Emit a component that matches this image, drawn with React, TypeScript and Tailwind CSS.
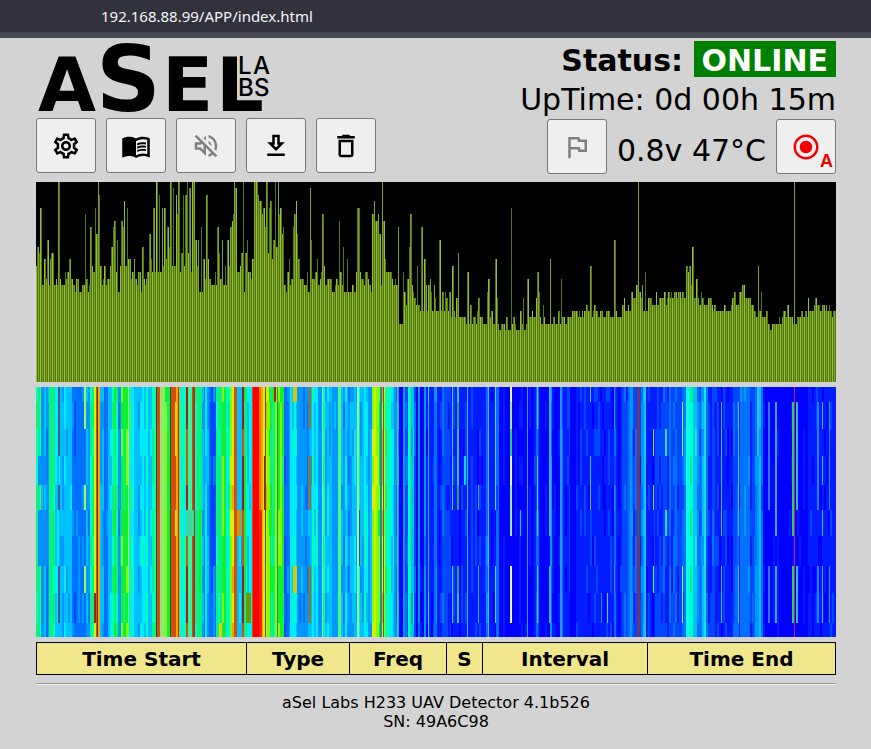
import React from 'react';
import {
  MdDeleteOutline,
  MdMenuBook,
  MdOutlineDownload,
  MdOutlineFlag,
  MdOutlineSettings,
  MdOutlineVolumeOff,
  MdRadioButtonChecked,
} from 'react-icons/md';

const SPECTRUM_HEIGHT = 200;
const SPECTRUM_LEVELS = 31;

// "x:drop" steps, drop is counted in levels from the top of the chart
const SPECTRUM = `
0:13 1:10 3:11 4:4 6:16 8:12 10:15 11:9 13:16 14:12 15:11 18:16 20:15 21:16 22:0 24:15 25:16 29:14 30:15 31:14 33:12
35:15 37:16 39:17 40:15 43:17 46:16 49:5 50:15 52:17 53:16 54:7 56:13 57:14 59:4 60:8 62:0 63:2 64:13 66:16 67:15
68:13 70:16 71:15 74:13 75:10 77:7 78:6 80:14 81:9 82:17 84:13 85:6 87:7 88:3 89:13 91:4 92:12 95:15 96:14 98:12
99:15 101:16 102:14 105:17 106:10 108:15 109:16 110:15 111:14 113:8 115:12 116:14 117:4 119:14 120:0 122:14 123:2
124:14 126:4 127:13 128:4 130:12 131:7 133:10 134:0 136:13 137:1 138:13 140:2 141:5 142:0 144:14 145:11 147:2
148:13 149:2 151:0 152:11 153:1 155:14 156:0 159:9 161:13 162:9 163:17 165:7 166:17 167:12 169:15 170:2 172:12
173:15 175:16 179:14 180:16 181:7 183:11 184:15 186:9 187:16 189:13 190:16 191:9 193:13 194:7 196:6 197:5 198:0
199:1 201:14 204:13 205:11 207:0 208:17 209:11 211:9 212:14 215:15 216:12 218:0 222:2 223:3 226:5 227:4 229:7
230:0 232:11 233:4 234:3 236:12 237:9 239:0 240:10 242:0 243:5 244:4 246:8 247:7 248:16 250:17 251:14 253:12
254:16 255:15 257:7 258:5 260:3 261:8 262:12 264:15 268:16 271:14 272:17 274:1 275:9 276:15 279:14 281:12 282:16
284:15 285:14 286:5 288:13 289:16 291:15 296:17 299:16 300:15 302:16 303:6 304:14 306:16 307:10 308:17 311:12
312:17 316:16 318:17 320:14 321:4 324:14 325:15 328:16 329:14 332:15 333:16 335:17 336:5 338:3 339:6 342:5 343:8
345:16 346:0 347:6 349:12 350:14 356:15 357:16 359:15 360:16 362:7 363:22 367:14 368:17 370:19 371:15 373:10
374:5 376:16 377:17 378:18 380:19 381:13 382:19 384:20 385:7 387:20 388:12 390:16 391:20 392:16 394:15 395:17
396:20 398:16 399:18 400:20 403:9 405:20 406:17 408:20 409:17 410:18 412:20 413:17 415:21 416:13 418:20 419:21
420:18 422:11 423:21 430:22 431:14 433:22 434:19 436:22 437:21 440:22 441:20 442:18 444:21 447:22 451:17 452:15
454:21 455:20 457:22 459:12 461:18 462:22 463:23 465:22 469:23 470:21 472:23 475:4 476:22 477:21 479:22 480:23
484:20 486:22 487:18 488:23 490:22 491:15 493:21 496:20 497:21 500:18 501:14 503:17 504:21 505:22 507:19 508:21
509:22 514:12 515:22 517:21 519:22 522:20 524:22 525:15 526:21 529:22 531:21 536:20 542:21 543:20 544:21 546:20
547:21 548:20 550:19 552:20 554:13 556:21 557:20 558:19 560:20 562:21 564:20 567:21 570:20 574:21 578:9 580:20
581:21 586:19 588:18 589:20 592:19 593:20 595:17 597:18 600:16 602:0 603:17 605:18 606:16 607:20 609:14 610:20
612:18 616:19 620:17 621:19 623:18 628:17 630:19 631:18 632:17 634:18 635:17 636:18 638:17 641:18 642:17 645:18
646:17 648:18 650:13 652:14 653:13 655:16 656:10 658:18 660:15 662:18 663:19 665:17 666:18 668:19 672:18 676:19
677:20 678:19 680:20 688:19 690:20 695:19 696:18 698:17 700:19 703:17 706:16 709:18 715:19 718:20 720:21 722:13
723:20 725:17 726:21 730:20 732:22 734:23 736:22 743:21 744:22 746:21 747:20 750:21 751:19 753:21 757:22 758:0
759:22 761:21 765:20 767:21 769:20 771:21 772:18 773:20 778:19 779:18 781:19 784:20 786:19 789:20 790:19 791:20
793:19 794:20 796:21 797:20`;

// cold to hot
const HEAT = [
  '#0010d0',
  '#0000ff',
  '#001cff',
  '#0048ff',
  '#0070ff',
  '#0098ff',
  '#00c0ff',
  '#00ecf8',
  '#00ffb8',
  '#0cf080',
  '#10f030',
  '#80fc10',
  '#d8f000',
  '#ffa000',
  '#d05010',
  '#ff0000',
];

// "x:level" steps along the band
const WATERFALL = `
0:9 4:8 5:5 8:6 10:5 13:9 19:6 24:5 28:6 36:4 50:5 54:9 58:12 60:14 62:13 64:6 68:4 72:6 76:9 82:5 85:10 90:11 93:7
98:6 104:7 112:6 116:8 120:14 125:11 131:10 134:14 140:13 144:8 150:14 153:9 156:14 159:9 166:5 169:6 173:4 180:9
186:10 190:8 194:11 196:12 198:14 201:6 206:14 208:9 211:7 216:14 217:15 223:13 227:12 231:11 234:9 239:11 242:10
248:4 251:5 254:7 261:5 272:6 276:7 282:5 286:8 289:6 296:5 302:9 305:5 309:6 312:5 318:6 321:9 324:6 328:7 332:5
336:12 340:11 343:10 346:12 349:8 353:7 358:5 363:1 367:5 369:3 372:8 375:6 378:3 380:1 382:5 384:1 388:5 390:2
392:6 393:2 398:4 401:2 404:3 415:2 429:2 450:4 453:2 460:4 463:1 498:2 500:4 503:1 514:4 516:1 525:4 527:2 534:1
540:2 578:3 580:2 586:3 592:4 594:5 597:3 605:5 607:6 610:2 619:3 646:4 650:8 657:6 661:4 666:5 668:7 670:3 679:2
697:3 704:4 714:3 719:5 725:4 727:1 759:1 772:2`;

interface Streak {
  x: number;
  w: number;
  color: string;
  // indexes of the time bands where the signal is present, all of them if left out
  bands?: number[];
}

const MOST_BANDS = [0, 1, 2, 3, 4, 7, 8];

const STREAKS: Streak[] = [
  { x: 4, w: 1, color: '#70d878', bands: [0, 1, 4, 7, 8] },
  { x: 2, w: 9, color: '#0090ff', bands: [3, 5, 6] },
  { x: 22, w: 2, color: '#485890', bands: [0, 1, 2, 4, 7, 8] },
  { x: 48, w: 2, color: '#a0f850', bands: [0, 1, 4, 7] },
  { x: 58, w: 2, color: '#b01818', bands: [8] },
  { x: 61, w: 1, color: '#504010' },
  { x: 120, w: 1, color: '#285028' },
  { x: 122, w: 2, color: '#e04818' },
  { x: 124, w: 5, color: '#90e870' },
  { x: 134, w: 1, color: '#385010' },
  { x: 139, w: 2, color: '#e0d010', bands: [1, 2, 5] },
  { x: 142, w: 1, color: '#605018' },
  { x: 150, w: 2, color: '#b01810', bands: [0, 1, 4, 7, 8] },
  { x: 152, w: 4, color: '#30f8a0' },
  { x: 157, w: 2, color: '#b03020' },
  { x: 150, w: 8, color: '#40d8a0', bands: [5] },
  { x: 174, w: 6, color: '#0048ff', bands: [1, 2, 4, 5, 6] },
  { x: 183, w: 3, color: '#e0d010', bands: [9] },
  { x: 201, w: 4, color: '#d89008', bands: [5] },
  { x: 206, w: 2, color: '#901c28', bands: [0, 1, 3, 4, 7, 8] },
  { x: 210, w: 5, color: '#709800', bands: [8] },
  { x: 217, w: 6, color: '#ff0000' },
  { x: 223, w: 3, color: '#ff2000', bands: [5, 6, 7, 8, 9] },
  { x: 223, w: 2, color: '#ff7000', bands: [0, 1, 2, 3, 4] },
  { x: 228, w: 2, color: '#b01818', bands: [3, 4] },
  { x: 229, w: 1, color: '#505800' },
  { x: 238, w: 2, color: '#b02018', bands: [0] },
  { x: 241, w: 1, color: '#488020' },
  { x: 257, w: 4, color: '#d8c808', bands: [0, 7] },
  { x: 272, w: 3, color: '#807850', bands: [0, 1, 3, 4, 7, 8] },
  { x: 286, w: 1, color: '#60f8b0' },
  { x: 302, w: 3, color: '#50f880' },
  { x: 321, w: 2, color: '#90ffa8' },
  { x: 323, w: 1, color: '#404878', bands: [5, 6] },
  { x: 344, w: 2, color: '#189098' },
  { x: 347, w: 1, color: '#805010' },
  { x: 361, w: 1, color: '#60b8a0' },
  { x: 416, w: 1, color: '#40c8ff', bands: MOST_BANDS },
  { x: 421, w: 2, color: '#30c0e0', bands: [0, 2, 3, 8] },
  { x: 421, w: 2, color: '#20a870', bands: [1, 4, 7] },
  { x: 428, w: 2, color: '#00d8ff', bands: [3] },
  { x: 431, w: 1, color: '#40b0f8' },
  { x: 442, w: 1, color: '#40a8f0', bands: [4, 7, 8] },
  { x: 452, w: 1, color: '#50b8f8' },
  { x: 459, w: 1, color: '#50d0f0', bands: MOST_BANDS },
  { x: 474, w: 2, color: '#e8f890', bands: [0, 3, 7, 8] },
  { x: 474, w: 2, color: '#a0e880', bands: [1, 4, 5] },
  { x: 474, w: 2, color: '#30c878', bands: [2] },
  { x: 484, w: 1, color: '#40b0e8', bands: [5] },
  { x: 491, w: 1, color: '#3098ff' },
  { x: 501, w: 1, color: '#38d0ff', bands: [0, 1, 3, 4, 5, 7, 8] },
  { x: 513, w: 2, color: '#38b0f8', bands: [0, 1, 2, 3, 4, 5, 7, 8] },
  { x: 524, w: 2, color: '#2098f8' },
  { x: 554, w: 1, color: '#48c0e8', bands: [0, 3, 4] },
  { x: 565, w: 1, color: '#2878ff', bands: [8] },
  { x: 571, w: 1, color: '#48d0e8', bands: [8] },
  { x: 578, w: 1, color: '#2090ff', bands: [0, 1, 4, 7] },
  { x: 601, w: 3, color: '#783068' },
  { x: 601, w: 2, color: '#385878', bands: [5] },
  { x: 608, w: 2, color: '#10c8ff' },
  { x: 617, w: 1, color: '#70e0a8', bands: [2, 4, 7] },
  { x: 629, w: 2, color: '#30d8f0', bands: [2, 5] },
  { x: 646, w: 1, color: '#a0e8a0', bands: [1, 2, 7, 8] },
  { x: 650, w: 4, color: '#00fff0' },
  { x: 668, w: 2, color: '#20d8d8', bands: [1, 2, 3, 4, 5, 7, 8] },
  { x: 685, w: 1, color: '#30c0e8', bands: [1, 2, 3, 4, 5, 7, 8] },
  { x: 702, w: 1, color: '#30c8e8', bands: [1, 2, 3, 4, 5, 7, 8] },
  { x: 721, w: 2, color: '#30b8f8', bands: [0, 1, 2] },
  { x: 732, w: 2, color: '#2878ff', bands: [1, 2, 3, 4, 7, 8] },
  { x: 739, w: 2, color: '#38a8f0', bands: [1, 2, 3, 4, 5, 7, 8] },
  { x: 756, w: 2, color: '#30c860', bands: [1, 2, 3, 4, 5, 7, 8] },
  { x: 758, w: 1, color: '#c02068' },
  { x: 760, w: 2, color: '#30b8e0', bands: [1, 2, 3, 4, 7, 8] },
  { x: 781, w: 2, color: '#2080f8', bands: [1, 2, 3, 4, 7, 8] },
  { x: 786, w: 1, color: '#38b8e8', bands: [1, 3, 5, 7, 8] },
  { x: 793, w: 1, color: '#2888f8', bands: [1, 2, 3, 4, 7, 8] },
];

const BAND_TOPS = [0, 15, 42, 69, 98, 123, 149, 179, 206, 236, 250];

const parseSteps = (text: string) =>
  text
    .trim()
    .split(/\s+/)
    .map((pair) => pair.split(':').map(Number));

const spectrumPath = () => {
  const steps = parseSteps(SPECTRUM);
  let d = `M0 ${SPECTRUM_HEIGHT}`;
  steps.forEach(([x, drop]) => {
    const y = Math.round((drop * SPECTRUM_HEIGHT) / SPECTRUM_LEVELS);
    d += `H${x}V${y}`;
  });
  return `${d}H800V${SPECTRUM_HEIGHT}Z`;
};

const noise = (a: number, b: number) => {
  const n = Math.sin(a * 12.9898 + b * 78.233) * 43758.5453;
  return n - Math.floor(n);
};

// one path per heat level, so the DOM stays small
const waterfallPaths = () => {
  const steps = parseSteps(WATERFALL);
  const paths = HEAT.map(() => '');
  for (let band = 0; band < BAND_TOPS.length - 1; band++) {
    const top = BAND_TOPS[band];
    const height = BAND_TOPS[band + 1] - top;
    steps.forEach(([start, base], i) => {
      const end = i + 1 < steps.length ? steps[i + 1][0] : 800;
      for (let x = start; x < end; x += 2) {
        const width = Math.min(2, end - x);
        const drift = noise(x, 1) * 1.3 + noise(x, band + 5) * 0.9 - 1.1;
        let level = base;
        if (base > 1 && base < 13) {
          level = Math.round(base + drift);
        } else if (base === 1 && drift > 0.5) {
          level = 2;
        }
        level = Math.max(1, Math.min(15, level));
        paths[level] += `M${x} ${top}h${width}v${height}h-${width}z`;
      }
    });
  }
  return paths;
};

const Logo = () => (
  <svg
    viewBox="0 0 234 68"
    className="block h-[68px] w-[234px] overflow-visible"
    fontFamily="'DejaVu Sans', sans-serif"
    fontWeight={700}
    role="img"
    aria-label="aSel Labs"
  >
    <text x="2" y="67" fontSize="75">A</text>
    <text x="60" y="67" fontSize="90">S</text>
    <text x="126" y="67" fontSize="75">E</text>
    <text x="180" y="67" fontSize="75">L</text>
    <g fontFamily="Inter, sans-serif" fontSize="24" fontWeight={500}>
      <text x="202" y="30">L</text>
      <text x="217" y="30">A</text>
      <text x="202" y="52">B</text>
      <text x="218" y="52">S</text>
    </g>
  </svg>
);

interface ToolButtonProps {
  label: string;
  className?: string;
  children: React.ReactNode;
}

const ToolButton: React.FC<ToolButtonProps> = ({
  label,
  className = 'text-black',
  children,
}) => (
  <button
    type="button"
    aria-label={label}
    className={`relative flex h-[55px] w-[60px] items-center justify-center rounded-[3px] border border-[#767676] bg-[#efefef] ${className}`}
  >
    {children}
  </button>
);

const Spectrum = () => (
  <svg
    viewBox="0 0 800 200"
    preserveAspectRatio="none"
    shapeRendering="crispEdges"
    className="block h-[200px] w-full bg-black"
  >
    <defs>
      <pattern id="bars" width="4" height="200" patternUnits="userSpaceOnUse">
        <rect width="4" height="200" fill="#50780c" />
        <rect x="0" width="1" height="200" fill="#98bc40" />
        <rect x="2" width="1" height="200" fill="#7ca428" />
      </pattern>
    </defs>
    <path d={spectrumPath()} fill="url(#bars)" />
  </svg>
);

const Waterfall = () => (
  <svg
    viewBox="0 0 800 250"
    preserveAspectRatio="none"
    shapeRendering="crispEdges"
    className="block h-[250px] w-full bg-[#0000ff]"
  >
    {waterfallPaths().map((d, level) => (
      <path key={level} d={d} fill={HEAT[level]} />
    ))}
    {STREAKS.map(({ x, w, color, bands }, i) =>
      (bands ?? BAND_TOPS.slice(0, -1).map((_, b) => b)).map((band) => (
        <rect
          key={`${i}-${band}`}
          x={x}
          y={BAND_TOPS[band]}
          width={w}
          height={BAND_TOPS[band + 1] - BAND_TOPS[band]}
          fill={color}
        />
      ))
    )}
  </svg>
);

const columns = [
  { title: 'Time Start', width: 'w-[210px]' },
  { title: 'Type', width: 'w-[103px]' },
  { title: 'Freq', width: 'w-[97px]' },
  { title: 'S', width: 'w-[36px]' },
  { title: 'Interval', width: 'w-[165px]' },
  { title: 'Time End', width: 'w-[188px]' },
];

const App: React.FC = () => {
  return (
    <div className="min-h-screen bg-[#d3d3d3] font-['Verdana','DejaVu_Sans',sans-serif] text-black">
      <div className="h-[38px] border-b-[6px] border-[#454550] bg-[#32323d] pl-[101px] font-['Noto_Sans',sans-serif] text-[15px] leading-8 text-[#f4f4f8]">
        192.168.88.99/APP/index.html
      </div>

      <main className="pt-[3px] pr-[35px] pl-9">
        <header className="flex justify-between">
          <div className="flex flex-col gap-[6px] pt-[3px]">
            <Logo />
            <div className="flex gap-[10px]">
              <ToolButton label="Settings">
                <MdOutlineSettings size={30} />
              </ToolButton>
              <ToolButton label="Manual">
                <MdMenuBook size={30} />
              </ToolButton>
              <ToolButton label="Sound" className="text-[#808080]">
                <MdOutlineVolumeOff size={30} />
              </ToolButton>
              <ToolButton label="Download">
                <MdOutlineDownload size={30} />
              </ToolButton>
              <ToolButton label="Delete">
                <MdDeleteOutline size={30} />
              </ToolButton>
            </div>
          </div>

          <div className="flex flex-col items-end text-[30px] whitespace-nowrap">
            <div className="leading-8 font-bold">
              Status:{' '}
              <span className="inline-block bg-[#008000] px-2 pt-1 text-white">
                ONLINE
              </span>
            </div>
            <div className="pt-1 leading-[38px]">UpTime: 0d 00h 15m</div>
            <div className="flex gap-[10px]">
              <ToolButton label="Flag" className="text-[#808080]">
                <MdOutlineFlag size={30} />
              </ToolButton>
              <span className="pt-2 leading-[47px]">0.8v 47°C</span>
              <ToolButton label="Record" className="text-[#f00000]">
                <MdRadioButtonChecked size={30} />
                <span className="absolute right-[2px] bottom-0 font-['Liberation_Sans',sans-serif] text-lg leading-6 font-bold">
                  A
                </span>
              </ToolButton>
            </div>
          </div>
        </header>

        <div className="mt-2 flex flex-col gap-[5px]">
          <Spectrum />
          <Waterfall />
          <table className="w-full table-fixed border-collapse bg-[#f0e68c] text-xl font-bold">
            <thead>
              <tr>
                {columns.map(({ title, width }) => (
                  <th
                    key={title}
                    className={`h-8 border border-black p-0 leading-7 ${width}`}
                  >
                    {title}
                  </th>
                ))}
              </tr>
            </thead>
          </table>
        </div>

        <hr className="mt-2 h-[2px] border-t border-b border-t-[#9a9a9a] border-b-[#eeeeee]" />
        <footer className="mt-2 text-center text-base leading-[19px]">
          <p>aSel Labs H233 UAV Detector 4.1b526</p>
          <p>SN: 49A6C98</p>
        </footer>
      </main>
    </div>
  );
};

export default App;
